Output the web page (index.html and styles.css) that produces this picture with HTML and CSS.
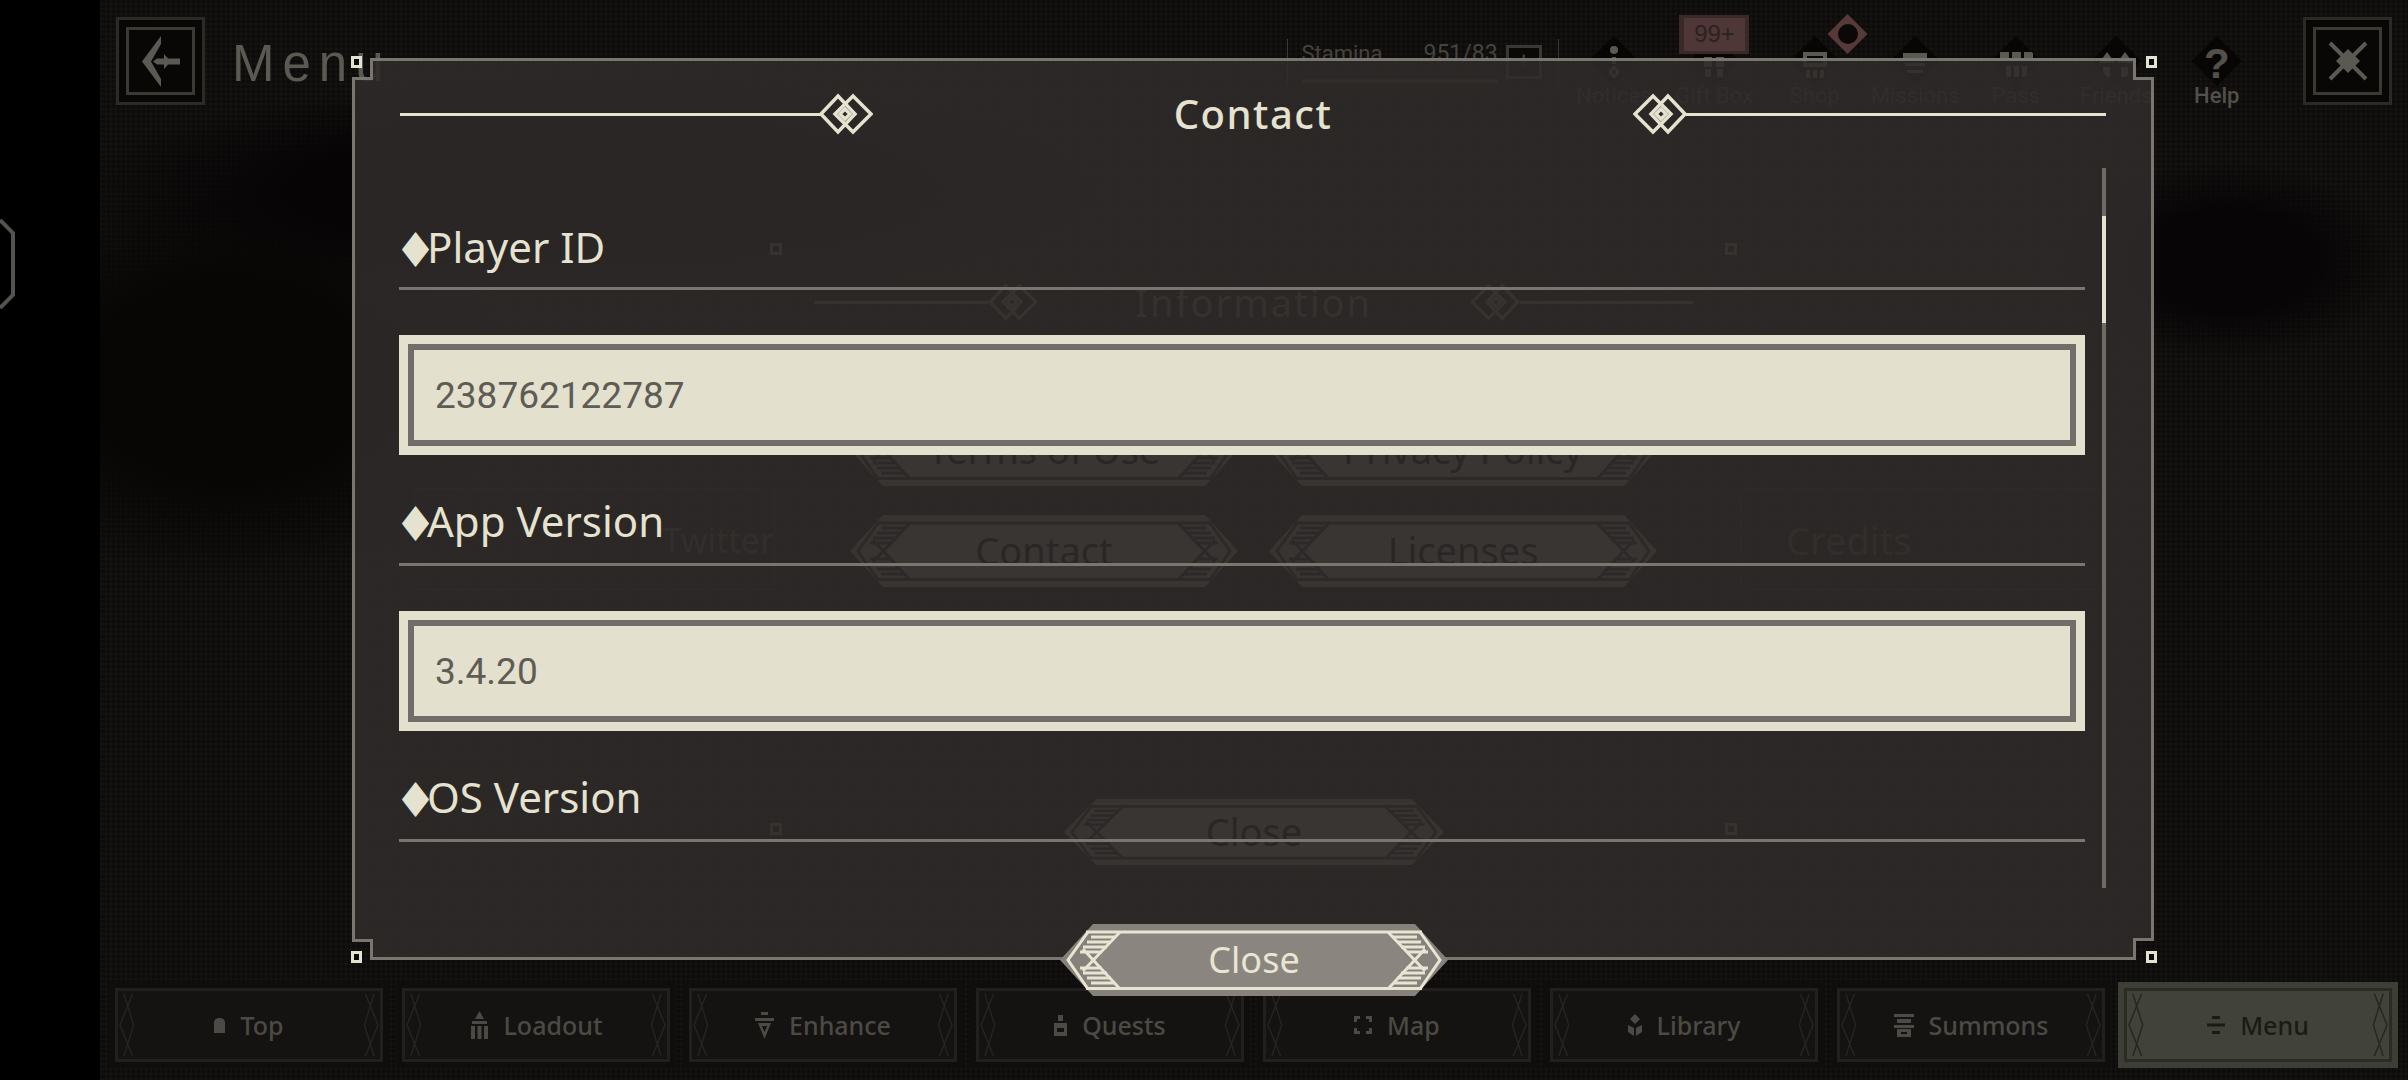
FILE: index.html
```html
<!DOCTYPE html>
<html lang="en">
<head>
<meta charset="utf-8">
<title>Contact</title>
<link rel="stylesheet" href="styles.css">
</head>
<body>
<svg class="defs" width="0" height="0" aria-hidden="true">
  <defs>
    <symbol id="plate" viewBox="0 0 388 72" preserveAspectRatio="none">
      <polygon class="plate-outer" points="33,0 355,0 388,36 355,72 33,72 0,36"/>
      <polygon class="plate-inner" points="60,8 328,8 350,36 328,65 60,65 38,36"/>
      <path class="plate-line" d="M26 8H362M26 64.500H362"/>
      <path class="plate-line" d="M28 8L8 36L28 65M60 8L23 47M60 65L23 25M360 8L380 36L360 65M328 8L365 47M328 65L365 25"/>
      <path class="plate-line" d="M31 13H55M27 18H51M23 23H47M20 28H42M20 44H42M23 49H47M27 54H51M31 59H55M357 13H333M361 18H337M365 23H341M368 28H346M368 44H346M365 49H341M361 54H337M357 59H333"/>
    </symbol>
    <symbol id="knot" viewBox="0 0 54 44">
      <g fill="none" stroke="currentColor" stroke-width="3.500">
        <polygon points="19,4 36,22 19,40 2,22"/>
        <polygon points="34,4 52,22 34,40 16,22"/>
        <polygon points="26,17 31,22 26,27 21,22"/>
      </g>
    </symbol>
    <symbol id="navframe" viewBox="0 0 268 74" preserveAspectRatio="none">
      <path d="M15 3L2 37L15 71M6 3L16 37L6 71M253 3L266 37L253 71M262 3L252 37L262 71" fill="none" stroke="currentColor" stroke-width="1.500"/>
    </symbol>
  </defs>
</svg>

<div class="screen">
  <aside class="rail">
    <svg class="rail-tab" viewBox="0 0 16 90" aria-hidden="true">
      <path d="M0 1L13 14V76L0 89" fill="none" stroke="#55534f" stroke-width="4"/>
    </svg>
  </aside>

  <main class="game">
    <header class="topbar">
      <div class="framebtn">
        <div class="framebtn-in">
          <svg class="back-ico" viewBox="0 0 38 51" aria-hidden="true">
            <path d="M19 0V8L9 25.500L19 43V51L0 25.500Z M15 22.500H22V18L26 22.500H38V28.500H26L22 33V28.500H15L11 25.500Z" fill="#5a5a52"/>
          </svg>
        </div>
      </div>
      <div class="pagetitle">Menu</div>
      <div class="stamina">
        <div class="stamina-row">
          <span>Stamina</span>
          <span class="stamina-val">951/83</span>
          <span class="stamina-plus">+</span>
        </div>
        <i class="stamina-bar"></i>
      </div>
      <nav class="tools">
        <div class="tool">
          <i class="tool-ico"><svg viewBox="0 0 50 50" aria-hidden="true"><circle cx="25" cy="14" r="4"/><path d="M23 21h4v7h-4z"/><path d="M25 29l6 7-6 7-6-7z M25 33l-2.500 3 2.500 3 2.500-3z" fill-rule="evenodd"/></svg></i>
          <span>Notices</span>
        </div>
        <div class="tool">
          <b class="badge"><span class="badge-in">99+</span></b>
          <i class="tool-ico"><svg viewBox="0 0 50 50" aria-hidden="true"><path d="M15 21h8v10h-8z M27 21h8v10h-8z M16 33h6v8h-6z M28 33h6v8h-6z"/></svg></i>
          <span>Gift Box</span>
        </div>
        <div class="tool">
          <i class="alert"><i class="alert-dot"></i></i>
          <i class="tool-ico"><svg viewBox="0 0 50 50" aria-hidden="true"><path d="M13 16h24v15H13z M17 20v7h16v-7z M16 34h4v8h-4z M23 34h4v8h-4z M30 34h4v8h-4z" fill-rule="evenodd"/></svg></i>
          <span>Shop</span>
        </div>
        <div class="tool">
          <i class="tool-ico"><svg viewBox="0 0 50 50" aria-hidden="true"><path d="M13 17h24v5H13z M15 27h20v3H15z M17 34h16v3H17z"/></svg></i>
          <span>Missions</span>
        </div>
        <div class="tool">
          <i class="tool-ico"><svg viewBox="0 0 50 50" aria-hidden="true"><path d="M9 16h9v9H9z M21 16h9v9h-9z M33 16h9v9h-9z M15 30h5v11h-5z M23 30h5v11h-5z M31 30h5v11h-5z"/></svg></i>
          <span>Pass</span>
        </div>
        <div class="tool">
          <i class="tool-ico"><svg viewBox="0 0 50 50" aria-hidden="true"><path d="M8 27l8-11 8 11z M26 27l8-11 8 11z M12 31h7v10h-7z M30 31h7v10h-7z"/></svg></i>
          <span>Friends</span>
        </div>
        <div class="tool tool-help"><i class="tool-ico"><em>?</em></i><span>Help</span></div>
      </nav>
      <div class="framebtn framebtn-right">
        <div class="framebtn-in">
          <svg class="x-ico" viewBox="0 0 40 40" aria-hidden="true">
            <path d="M2 2L38 38M38 2L2 38" stroke="#5a5a52" stroke-width="4"/>
            <path d="M20 8L32 20L20 32L8 20Z" fill="#5a5a52"/>
          </svg>
        </div>
      </div>
    </header>

    <div class="stage"></div>

    <footer class="tabs">
      <div class="tab"><svg class="tab-frame"><use href="#navframe"/></svg>
        <svg class="tab-ico" width="11" height="15" viewBox="0 0 11 15" aria-hidden="true"><path d="M0 15V5Q0 0 5.500 0T11 5V15Z"/></svg>Top</div>
      <div class="tab"><svg class="tab-frame"><use href="#navframe"/></svg>
        <svg class="tab-ico" width="19" height="28" viewBox="0 0 19 28" aria-hidden="true"><path d="M9.500 0L14 8H5Z M2 10H17V13H2Z M1 15H5V28H1Z M7.500 15H11.500V28H7.500Z M14 15H18V28H14Z"/></svg>Loadout</div>
      <div class="tab"><svg class="tab-frame"><use href="#navframe"/></svg>
        <svg class="tab-ico" width="19" height="27" viewBox="0 0 19 27" aria-hidden="true"><path d="M6 0H13V3H6Z M0 6H19V9H0Z M3 11H16L9.500 27Z M7 14L9.500 20L12 14Z" fill-rule="evenodd"/></svg>Enhance</div>
      <div class="tab"><svg class="tab-frame"><use href="#navframe"/></svg>
        <svg class="tab-ico" width="13" height="21" viewBox="0 0 13 21" aria-hidden="true"><path d="M4 0H9V6H4Z M0 8H13V21H0Z M3 13H10V17H3Z" fill-rule="evenodd"/></svg>Quests</div>
      <div class="tab"><svg class="tab-frame"><use href="#navframe"/></svg>
        <svg class="tab-ico tab-ico-line" width="18" height="18" viewBox="0 0 18 18" aria-hidden="true"><path d="M1.500 6V1.500H6M12 1.500H16.500V6M16.500 12V16.500H12M6 16.500H1.500V12"/></svg>Map</div>
      <div class="tab"><svg class="tab-frame"><use href="#navframe"/></svg>
        <svg class="tab-ico" width="14" height="22" viewBox="0 0 14 22" aria-hidden="true"><path d="M7 0L12 5L7 10L2 5Z M0 11L6 14V22L0 18Z M14 11L8 14V22L14 18Z"/></svg>Library</div>
      <div class="tab"><svg class="tab-frame"><use href="#navframe"/></svg>
        <svg class="tab-ico" width="20" height="23" viewBox="0 0 20 23" aria-hidden="true"><path d="M0 0H20V3H0Z M3 5H17V9H3Z M0 11H20V14H0Z M3 15H17V23H3Z M7 18H13V20H7Z" fill-rule="evenodd"/></svg>Summons</div>
      <div class="tab tab-active"><svg class="tab-frame"><use href="#navframe"/></svg>
        <svg class="tab-ico" width="18" height="18" viewBox="0 0 18 18" aria-hidden="true"><path d="M5 0H13V3H5Z M0 7.500H18V10.500H0Z M5 15H13V18H5Z"/></svg>Menu</div>
    </footer>
  </main>

  <section class="ghost">
    <div class="gside gside-left"><span>Twitter</span></div>
    <div class="gside gside-right"><span>Credits</span></div>
    <i class="pin pin-tl"></i><i class="pin pin-tr"></i><i class="pin pin-bl"></i><i class="pin pin-br"></i>
    <div class="ghost-head">
      <i class="ghost-rule"></i><svg class="ghost-knot"><use href="#knot"/></svg>
      <span class="ghost-title">Information</span>
      <svg class="ghost-knot flip"><use href="#knot"/></svg><i class="ghost-rule"></i>
    </div>
    <div class="ghost-grid">
      <div class="gbtn"><svg class="gbtn-bg"><use href="#plate"/></svg><span>Terms of Use</span></div>
      <div class="gbtn"><svg class="gbtn-bg"><use href="#plate"/></svg><span>Privacy Policy</span></div>
      <div class="gbtn"><svg class="gbtn-bg"><use href="#plate"/></svg><span>Contact</span></div>
      <div class="gbtn"><svg class="gbtn-bg"><use href="#plate"/></svg><span>Licenses</span></div>
    </div>
    <div class="ghost-close gbtn"><svg class="gbtn-bg"><use href="#plate"/></svg><span>Close</span></div>
  </section>

  <section class="dialog">
    <svg class="dialog-edge" viewBox="0 0 1802 902" aria-hidden="true">
      <polygon class="dialog-shape" points="19.500,1.500 1782.500,1.500 1782.500,20.500 1800.500,20.500 1800.500,881.500 1782.500,881.500 1782.500,900.500 19.500,900.500 19.500,882.500 1.500,882.500 1.500,20.500 19.500,20.500"/>
    </svg>
    <i class="corner corner-tl"></i><i class="corner corner-tr"></i><i class="corner corner-bl"></i><i class="corner corner-br"></i>

    <div class="dialog-head">
      <i class="rule"></i>
      <svg class="knot"><use href="#knot"/></svg>
      <h1 class="dialog-title">Contact</h1>
      <svg class="knot flip"><use href="#knot"/></svg>
      <i class="rule"></i>
    </div>

    <div class="dialog-body">
      <div class="fields">
        <h2 class="field-label"><span class="mark">♦</span>Player ID</h2>
        <div class="field-box"><div class="field-in">238762122787</div></div>
        <h2 class="field-label"><span class="mark">♦</span>App Version</h2>
        <div class="field-box"><div class="field-in">3.4.20</div></div>
        <h2 class="field-label"><span class="mark">♦</span>OS Version</h2>
      </div>
      <div class="scrollbar"><i class="scroll-thumb"></i></div>
    </div>

    <div class="close">
      <svg class="close-bg"><use href="#plate"/></svg>
      <span class="close-text">Close</span>
    </div>
  </section>
</div>
</body>
</html>
```
FILE: styles.css
```css
* { box-sizing: border-box; }
html, body { margin: 0; height: 100%; background: #000; }
body { font-family: "Noto Sans", "Liberation Sans", sans-serif; overflow: hidden; }
i, em { font-style: normal; }
.defs { position: absolute; }

.screen { position: relative; display: flex; width: 2408px; height: 1080px; background: #000; overflow: hidden; }

.rail { position: relative; flex: 0 0 100px; background: #000; }
.rail-tab { position: absolute; left: 0; top: 219px; width: 16px; height: 90px; }

.game {
  flex: 1;
  display: flex;
  flex-direction: column;
  background-color: #0e0c0b;
  background-image:
    radial-gradient(ellipse 520px 110px at 480px 190px, #060404 55%, transparent 100%),
    radial-gradient(ellipse 280px 200px at 130px 380px, #080505 50%, transparent 100%),
    radial-gradient(ellipse 170px 100px at 2130px 260px, #070505 50%, transparent 100%),
    repeating-linear-gradient(90deg, rgba(255,255,255,.014) 0 2px, transparent 2px 5px),
    repeating-linear-gradient(0deg, rgba(255,255,255,.014) 0 2px, transparent 2px 5px);
}

.topbar { display: flex; align-items: flex-start; height: 120px; padding: 17px 16px 0 16px; color: #45433e; }
.framebtn { width: 89px; height: 88px; padding: 7px; border: 3px solid #2b2a26; flex: none; background: #080706; }
.framebtn-in { width: 100%; height: 100%; border: 3px solid #3a3934; display: flex; align-items: center; justify-content: center; }
.back-ico { width: 38px; height: 51px; }
.x-ico { width: 40px; height: 40px; }
.framebtn-right { margin-left: 36px; }
.pagetitle { margin: 22px auto 0 27px; font: 400 51px/50px "Liberation Sans", sans-serif; letter-spacing: 8px; color: #5a5a52; }

.stamina {
  display: flex; flex-direction: column; height: 44px; margin-top: 22px;
  width: 272px; flex: none; padding-left: 14px;
  border-left: 1px solid #3a3833; border-right: 1px solid #3a3833;
}
.stamina-row { display: flex; align-items: flex-start; height: 32px; font: 400 22px/30px Roboto, sans-serif; color: #45433e; }
.stamina-val { margin-left: 41px; font-size: 23px; }
.stamina-plus { width: 36px; height: 34px; margin: 6px 0 0 8px; border: 3px solid #3a3833; background: #0a0908; text-align: center; line-height: 26px; }
.stamina-bar { display: block; width: 196px; height: 5px; margin-top: 8px; background: #3f3c37; }

.tools { display: flex; margin-left: 5px; }
.tool { position: relative; width: 100.500px; height: 100px; display: flex; flex-direction: column; align-items: center; padding-top: 19px; font: 400 22px/22px Roboto, sans-serif; color: #3e3d38; }
.tool-ico { display: flex; align-items: center; justify-content: center; position: relative; width: 50px; height: 50px; flex: none; margin-bottom: -1px; background: #080605; clip-path: polygon(50% 0, 100% 50%, 50% 100%, 0 50%); }
.tool-ico svg { width: 50px; height: 50px; fill: #5a5a52; }
.tool-help { font-weight: 500; color: #52504a; }
.tool-help em { font: 700 42px/50px "Liberation Sans", sans-serif; color: #52504a; padding-top: 6px; }
.badge { position: absolute; left: 15px; top: -2px; width: 70px; height: 39px; padding: 3px 4px 3px 5px; background: #3a2929; z-index: 1; }
.badge-in { display: block; height: 33px; background: #4f3637; color: #2b2221; font: 400 24px/32px "Liberation Sans", sans-serif; text-align: center; }
.alert { position: absolute; left: 63px; top: -3px; width: 40px; height: 40px; background: #57393a; clip-path: polygon(50% 0, 100% 50%, 50% 100%, 0 50%); display: flex; align-items: center; justify-content: center; z-index: 1; }
.alert-dot { width: 20px; height: 20px; border-radius: 50%; background: #0b0908; }

.stage { flex: 1; }

.tabs { display: flex; gap: 19px; height: 92px; padding: 0 0 18px 15px; align-items: flex-end; }
.tab {
  position: relative; width: 268px; height: 74px; flex: none;
  display: flex; align-items: center; justify-content: center; gap: 15px;
  background: #151311; border: 3px solid #221f1c;
  outline: 6px solid #100e0d;
  font-size: 25px; font-weight: 500; color: #4b4a44;
}
.tab-frame { position: absolute; left: 0; top: 0; width: 100%; height: 100%; color: #262421; }
.tab-ico { flex: none; fill: currentColor; }
.tab-ico-line { fill: none; stroke: currentColor; stroke-width: 3; }
.tab-active { background: #41423a; border-color: #2c2c26; outline-color: #3d3e36; color: #1b1a16; }
.tab-active .tab-frame { color: #27271f; }

/* ghost of the Information panel, seen through the dialog */
.ghost { position: absolute; left: 776px; top: 249px; width: 955px; height: 580px; color: #68645c; --plate-outer: #79736b; --plate-inner: #7f7970; --plate-line: #1e1b19; }
.pin { position: absolute; width: 12px; height: 12px; border: 3px solid #6a665e; }
.pin-tl { left: -6px; top: -6px; } .pin-tr { right: -6px; top: -6px; }
.pin-bl { left: -6px; bottom: -6px; } .pin-br { right: -6px; bottom: -6px; }
.ghost-head { display: flex; align-items: center; height: 40px; margin: 33px 38px 0; }
.ghost-title { width: 432px; flex: none; text-align: center; font-size: 38px; line-height: 40px; letter-spacing: 2px; color: #5f5b54; }
.ghost-rule { flex: 1; height: 3px; background: currentColor; }
.ghost-knot { width: 50px; height: 40px; flex: none; }
.flip { transform: scaleX(-1); }
.ghost-grid { display: grid; grid-template-columns: 388px 388px; gap: 29px 31px; justify-content: center; margin-top: 92px; }
.gbtn { position: relative; height: 72px; display: flex; align-items: center; justify-content: center; padding-bottom: 3px; font-size: 38px; line-height: 66px; color: #050403; }
.gbtn-bg { position: absolute; left: 0; top: 0; width: 100%; height: 100%; }
.gbtn span { position: relative; }
.ghost-close { position: absolute; left: 288px; top: 550px; width: 380px; height: 66px; }
.gside { position: absolute; top: 239px; height: 103px; display: flex; align-items: center; color: #46433d; border: 2px solid #1c1a18; }
.gside-left { right: 100%; width: 361px; justify-content: flex-end; font-size: 34px; }
.gside-right { left: 100%; margin-left: 9px; width: 364px; padding-left: 44px; font-size: 38px; }

/* dialog */
.dialog { position: absolute; left: 352px; top: 58px; width: 1802px; height: 902px; color: #e5e2cf; --plate-outer: #86817b; --plate-inner: #8a857f; --plate-line: #e8e5d3; }
.dialog-edge { position: absolute; left: 0; top: 0; width: 100%; height: 100%; }
.dialog-shape { fill: rgba(47,43,42,.88); stroke: #79756f; stroke-width: 3; }
.corner { position: absolute; width: 11px; height: 12px; background: #0d0c0a; border: 3px solid #e5e2cf; }
.corner-tl { left: -1px; top: -2px; } .corner-tr { right: -3px; top: -2px; }
.corner-bl { left: -1px; bottom: -3px; } .corner-br { right: -3px; bottom: -3px; }

.plate-outer { fill: var(--plate-outer); }
.plate-inner { fill: var(--plate-inner); }
.plate-line { fill: none; stroke: var(--plate-line); stroke-width: 3; }

.dialog-head { position: relative; display: flex; align-items: center; height: 44px; margin: 34px 48px 0; }
.rule { flex: 1; height: 3px; background: #e5e2cf; }
.knot { width: 54px; height: 44px; flex: none; margin-left: -2px; color: #e5e2cf; }
.knot.flip { margin: 0 -2px 0 0; }
.dialog-title { width: 760px; flex: none; margin: 0; text-align: center; font: 500 40px/44px "Noto Sans", sans-serif; letter-spacing: 1.500px; color: #e5e2cf; }

.dialog-body { position: relative; display: flex; height: 720px; margin: 32px 48px 0 47px; }
.fields { width: 1691px; height: 720px; margin-left: -5px; padding-left: 5px; overflow: hidden; flex: none; }
.field-label { height: 69px; margin: 42px 0 0; border-bottom: 3px solid #7a756f; padding-bottom: 16px; font: 400 42px/48px "Noto Sans", sans-serif; color: #e5e2cf; }
.field-label:first-child { margin-top: 0; height: 122px; padding-top: 55px; }
.mark { font: 400 48px/0 "DejaVu Sans", sans-serif; letter-spacing: -10px; margin-left: -5px; vertical-align: -4px; }
.field-box { height: 120px; margin-top: 45px; padding: 9px; background: #e3e0cd; }
.field-in { height: 100%; border: 6px solid #716d68; padding-left: 21px; display: flex; align-items: center; font: 400 37px/1 Roboto, sans-serif; color: #5f5c55; }
.scrollbar { position: absolute; right: 0; top: 0; width: 4px; height: 720px; background: #6e6a66; }
.scroll-thumb { position: absolute; left: 0; top: 48px; width: 4px; height: 107px; background: #e5e2cf; }

.close { position: absolute; left: 708px; top: 866px; width: 388px; height: 72px; display: flex; align-items: center; justify-content: center; }
.close-bg { position: absolute; left: 0; top: 0; width: 100%; height: 100%; }
.close-text { position: relative; font: 400 36px/1 "Noto Sans", sans-serif; color: #e8e5d3; }
```
